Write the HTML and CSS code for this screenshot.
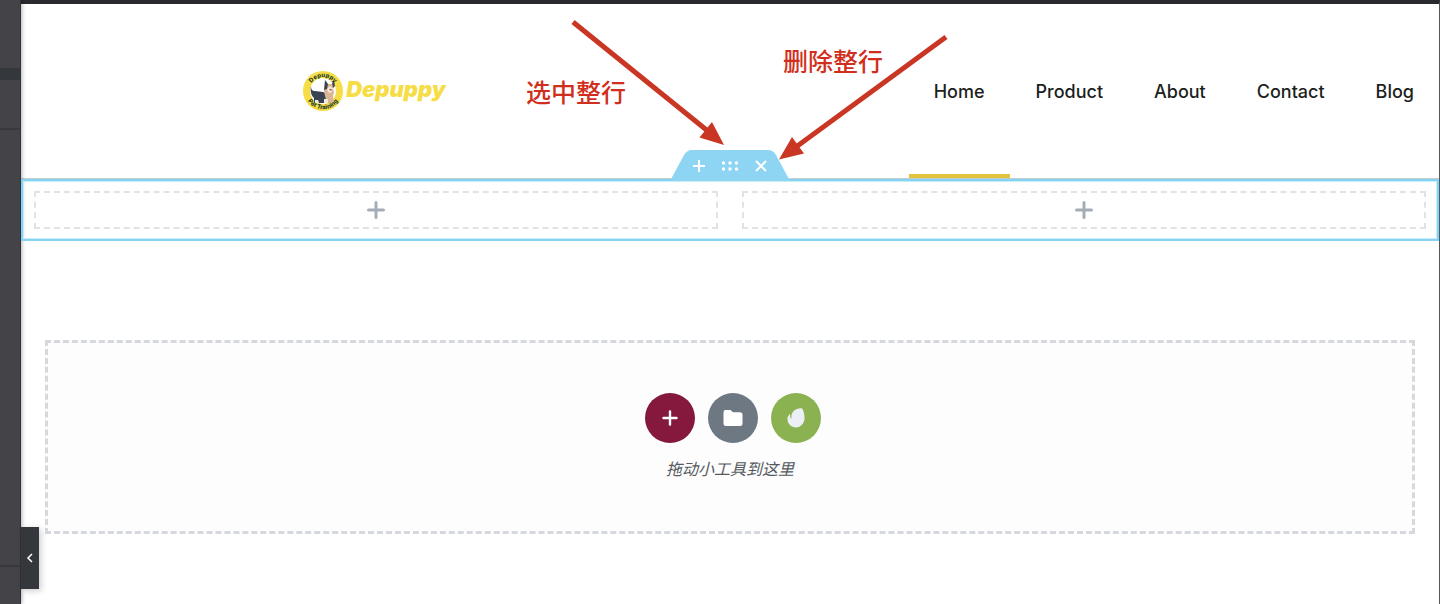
FILE: index.html
```html
<!DOCTYPE html>
<html lang="zh-CN">
<head>
<meta charset="utf-8">
<meta name="viewport" content="width=device-width, initial-scale=1">
<title>Depuppy</title>
<link rel="stylesheet" href="styles.css">
</head>
<body>
<div class="editor">
  <aside class="panel">
    <div class="panel-block panel-block-top"></div>
    <div class="panel-divider"></div>
    <div class="panel-block panel-block-small"></div>
    <div class="panel-block panel-block-main"></div>
    <div class="panel-block panel-block-foot"></div>
    <button class="panel-toggle" type="button" aria-label="收起面板">
      <svg width="8" height="10" viewBox="0 0 8 10"><path d="M6 1 2 5l4 4" fill="none" stroke="#fff" stroke-width="1.5"/></svg>
    </button>
  </aside>

  <main class="preview">
    <header class="site-header">
      <a class="logo" href="#">
        <svg class="logo-badge" viewBox="0 0 40 40">
          <defs>
            <path id="arc-top" d="M6 20a14 14 0 0 1 28 0"/>
            <path id="arc-bottom" d="M1.800 20a18.200 18.200 0 0 0 36.400 0"/>
          </defs>
          <circle cx="20" cy="20" r="20" fill="#f6dd45"/>
          <circle cx="20" cy="20" r="13" fill="#fff"/>
          <path d="M8 15c0 3 1 5 4 5l8 1 4 2 1 6-3 3H11v-5c-3-2-4-8-3-12z" fill="#3b4352"/>
          <path d="M23 13h6l2 8-1 4 1 7h-7l-2-7-1-5z" fill="#d9b694"/>
          <path d="m22 9 3 4-1 5-3 1zM29 12l2-2 1 5-2 2z" fill="#3b4352"/>
          <path d="m24 18 3-3 3 3-2 4-3-1z" fill="#f5e9db"/>
          <path d="M26 18h3l-1 2z" fill="#c44235"/>
          <path d="M12 29h3l1 3h-4zM21 28h4v4h-4z" fill="#eee8df"/>
          <text class="badge-text"><textPath href="#arc-top" startOffset="50%">Depuppy</textPath></text>
          <text class="badge-text"><textPath href="#arc-bottom" startOffset="50%">Pet Training</textPath></text>
        </svg>
        <span class="logo-name">Depuppy</span>
      </a>
      <nav class="site-nav">
        <a class="nav-link is-active" href="#">Home</a>
        <a class="nav-link" href="#">Product</a>
        <a class="nav-link" href="#">About</a>
        <a class="nav-link" href="#">Contact</a>
        <a class="nav-link" href="#">Blog</a>
      </nav>
    </header>

    <section class="row">
      <div class="row-handle">
        <svg class="handle-shape" viewBox="0 0 120 31"><path d="M0 31 14 5Q17 0 22 0h76q5 0 8 5l14 26z" fill="#8dd5f3"/></svg>
        <button class="handle-button" type="button" aria-label="添加">
          <svg viewBox="0 0 14 14"><path d="M7 1v12M1 7h12"/></svg>
        </button>
        <button class="handle-button handle-drag" type="button" aria-label="选中整行">
          <svg viewBox="0 0 18 10"><g fill="#fff"><circle cx="2.500" cy="2" r="1.700"/><circle cx="9" cy="2" r="1.700"/><circle cx="15.500" cy="2" r="1.700"/><circle cx="2.500" cy="8" r="1.700"/><circle cx="9" cy="8" r="1.700"/><circle cx="15.500" cy="8" r="1.700"/></g></svg>
        </button>
        <button class="handle-button" type="button" aria-label="删除整行">
          <svg viewBox="0 0 14 14"><path d="m2 2 10 10M12 2 2 12"/></svg>
        </button>
      </div>
      <button class="column" type="button" aria-label="添加小工具">
        <svg viewBox="0 0 18 18"><path d="M9 1.500v15M1.500 9h15"/></svg>
      </button>
      <button class="column" type="button" aria-label="添加小工具">
        <svg viewBox="0 0 18 18"><path d="M9 1.500v15M1.500 9h15"/></svg>
      </button>
    </section>

    <section class="drop-area">
      <div class="drop-actions">
        <button class="round round-add" type="button" aria-label="添加新区块">
          <svg width="16" height="16" viewBox="0 0 16 16"><path d="M8 1.500v13M1.500 8h13" stroke="#fff" stroke-width="2.400" stroke-linecap="round"/></svg>
        </button>
        <button class="round round-folder" type="button" aria-label="添加模板">
          <svg width="20" height="16" viewBox="0 0 20 16"><path d="M2.500 0h5L10 2.300h7A2.500 2.500 0 0 1 19.500 4.800v8.700A2.500 2.500 0 0 1 17 16H3A2.500 2.500 0 0 1 .5 13.500V2.200Q.5 0 2.500 0z" fill="#fff"/></svg>
        </button>
        <button class="round round-envato" type="button" aria-label="Envato">
          <svg width="18" height="20" viewBox="0 0 18 20"><path d="M14.600.3C12.900-.1 8.600.8 6.200 3.400 4.200 5.800 4.300 8.500 4.400 10.400c0 .4-.4.4-.5.100C3 9.300 2.900 7.800 3.300 6.600c.1-.6-.4-.7-.7-.4C.9 7.800.4 9.600.5 11.500c.3 4.700 4 7.900 8.400 7.900 5.100 0 8.300-4 8.600-8.600.2-4-1.200-9.900-2.900-10.500z" fill="#eceff5"/></svg>
        </button>
      </div>
      <p class="drop-hint">拖动小工具到这里</p>
    </section>
  </main>

  <svg class="arrows" width="400" height="160" viewBox="560 10 400 160">
    <g stroke="#c93623" stroke-width="5"><path d="M573 22 709 132"/><path d="M946 37 796 147"/></g>
    <g fill="#c93623"><path d="m724 145-24.500-7.500L712 122z"/><path d="m779 159.500 13-22.500L804 153.500z"/></g>
  </svg>
  <span class="note note-select">选中整行</span>
  <span class="note note-delete">删除整行</span>
</div>
</body>
</html>
```
FILE: styles.css
```css
* {
  box-sizing: border-box;
}

body {
  margin: 0;
  background: #fff;
  font-family: Inter, "Noto Sans CJK SC", sans-serif;
}

button {
  padding: 0;
  border: 0;
  background: none;
  cursor: pointer;
}

svg {
  display: block;
}

.editor {
  position: relative;
  display: flex;
  min-height: 100vh;
}

/* Left panel */
.panel {
  position: relative;
  display: flex;
  flex-direction: column;
  flex: 0 0 21px;
  background: #434348;
  border-right: 1px solid #323338;
  box-shadow: 1px 0 4px rgba(0, 0, 0, 0.3);
}

.panel-block-top {
  height: 68px;
}

.panel-divider {
  height: 12px;
  background: #34383c;
}

.panel-block-small {
  height: 50px;
  border-bottom: 2px solid #38393e;
}

.panel-block-main {
  flex: 1;
}

.panel-block-foot {
  height: 39px;
  border-top: 2px solid #38393e;
}

.panel-toggle {
  position: absolute;
  bottom: 15px;
  left: 21px;
  display: flex;
  align-items: center;
  justify-content: center;
  width: 18px;
  height: 62px;
  background: #34383c;
  box-shadow: 2px 2px 6px rgba(0, 0, 0, 0.2);
}

/* Preview */
.preview {
  flex: 1;
  min-width: 0;
  border-top: 4px solid #282a2d;
  border-right: 1px solid #55595c;
}

.site-header {
  display: flex;
  align-items: stretch;
  justify-content: space-between;
  height: 175px;
  padding-left: 19.9%;
  border-bottom: 1px solid #c8cbcd;
}

.logo {
  display: flex;
  align-items: center;
  gap: 3px;
  color: #f6dd45;
  text-decoration: none;
}

.logo-badge {
  width: 40px;
  height: 40px;
}

.badge-text {
  fill: #23402f;
  font-size: 6px;
  font-weight: 800;
  text-anchor: middle;
}

.logo-name {
  font-size: 22px;
  font-style: italic;
  font-weight: 900;
  line-height: 24px;
  padding-bottom: 4px;
}

.site-nav {
  display: flex;
  gap: 1px;
}

.nav-link {
  display: flex;
  align-items: center;
  padding: 4px 25px 0;
  border-bottom: 4px solid transparent;
  color: #1c1f20;
  font-size: 18px;
  font-weight: 500;
  text-decoration: none;
}

.nav-link.is-active {
  border-bottom-color: #e3c23c;
}

/* Selected row */
.row {
  position: relative;
  display: flex;
  gap: 24px;
  padding: 10px 11px;
  border: 2px solid #84d3f2;
  outline: 1px solid #c9ecf9;
  outline-offset: -3px;
}

.row-handle {
  position: absolute;
  bottom: 100%;
  left: 50%;
  display: flex;
  align-items: center;
  justify-content: center;
  gap: 15px;
  width: 120px;
  height: 31px;
  transform: translateX(-50%);
}

.handle-shape {
  position: absolute;
  inset: 0;
}

.handle-button {
  position: relative;
  width: 14px;
}

.handle-drag {
  width: 18px;
}

.handle-button path {
  fill: none;
  stroke: #fff;
  stroke-width: 2;
}

.column {
  display: flex;
  flex: 1;
  align-items: center;
  justify-content: center;
  height: 38px;
  border: 2px dashed #e0e2e6;
}

.column svg {
  width: 18px;
}

.column path {
  stroke: #a4adb5;
  stroke-width: 3;
  stroke-linecap: round;
}

/* Drop area */
.drop-area {
  display: flex;
  flex-direction: column;
  align-items: center;
  margin: 99px 24px 0;
  padding: 50px 0;
  border: 3px dashed #d5d8dc;
  background: #fdfdfd;
}

.drop-actions {
  display: flex;
  gap: 13px;
  margin-left: 6px;
}

.round {
  display: flex;
  align-items: center;
  justify-content: center;
  width: 50px;
  height: 50px;
  border-radius: 50%;
}

.round-add {
  background: #85183d;
}

.round-folder {
  background: #6d7882;
}

.round-envato {
  background: #8bb251;
}

.drop-hint {
  margin: 14px 0 0;
  color: #54595f;
  font-size: 16px;
  font-style: italic;
  line-height: 24px;
}

/* Annotations over the page */
.arrows {
  position: absolute;
  top: 10px;
  left: 560px;
  pointer-events: none;
}

.note {
  position: absolute;
  color: #d12f1d;
  font-size: 25px;
  font-weight: 500;
  line-height: 32px;
}

.note-select {
  top: 77px;
  left: 526px;
}

.note-delete {
  top: 46px;
  left: 783px;
}
```
